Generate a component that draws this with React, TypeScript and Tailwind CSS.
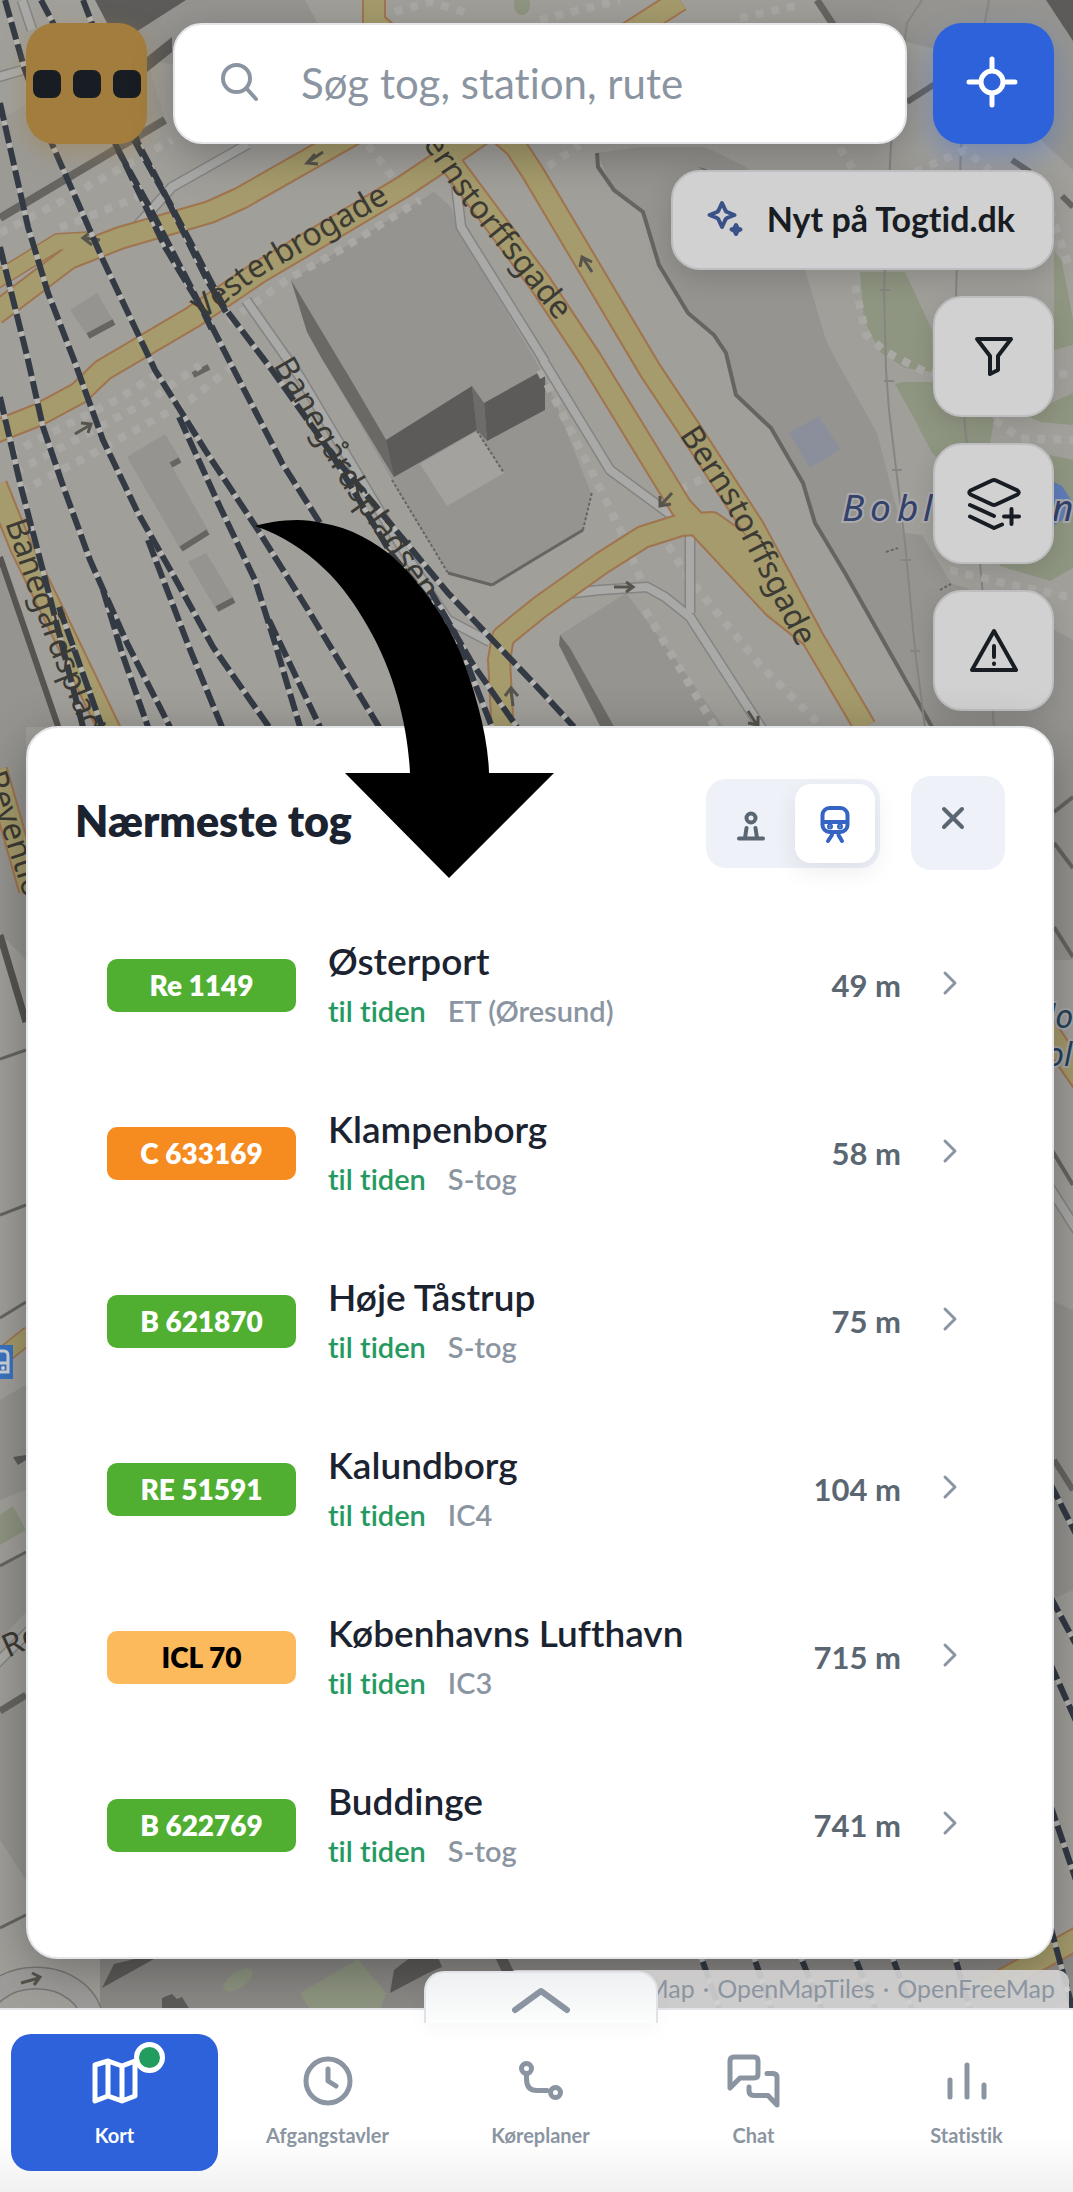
import type { ReactNode } from 'react';

const yellowRoads = [
  'M374 0 L374 22 L516 147 L533 173 L650 370 L688 427 L753 527 L812 637 L865 727',
  'M680 0 L630 32 L448 157 L403 187 L258 273 L193 317 L103 370 L79 393 L38 415 L-5 432',
  'M420 96 L336 144 L241 198 L210 212 L120 238 L69 258 L-5 314',
  'M436 143 L540 283 L591 360 L681 507 L774 607 L812 637',
  'M503 735 L499 660 L503 637 L540 607 L602 563 L643 537 L681 525 L712 523 L736 540 L774 593 L812 637',
  'M-4 485 L21 547 L52 610 L112 735',
  'M-4 770 L30 890',
  'M985 1990 L1080 1937',
  'M1040 1020 L1085 1085',
];

const thinYellow = ['M-5 281 L58 242 L93 240', 'M-5 1362 L30 1334'];

const minorRoads = [
  'M543 360 L610 470 L678 520',
  'M454 167 L461 227 L545 362',
  'M690 525 L690 613',
  'M565 594 L600 590 L647 587 L665 597 L690 617 L766 735',
  'M248 144 L172 187 L127 237',
  'M246 300 L300 377 L379 510 L430 593 L448 620 L490 642',
  'M22 0 L32 30',
  'M-5 78 L30 68',
  'M1045 1180 L1080 1235',
  'M-5 1665 L30 1630',
];

const rails = [
  'M5 0 L24 67 L52 144 L103 260 L155 370 L207 453 L258 530 L310 613 L379 727',
  'M41 0 L53 23 L120 153 L165 247 L207 317 L234 370 L282 463 L320 523',
  'M83 0 L138 143 L193 247 L224 307 L272 370 L331 453 L379 510 L448 593 L540 690 L574 727',
  'M0 103 L28 227 L48 293 L74 360 L103 440 L138 513 L176 580 L213 647 L269 727',
  'M0 247 L28 360 L43 427 L62 483 L90 560 L127 643 L170 727',
  'M118 150 L150 208 L196 297 L212 330',
  'M134 140 L165 195 L207 280 L226 312',
  'M0 397 L21 487 L48 590 L83 727',
  'M59 607 L102 727',
  'M103 590 L122 653 L148 727',
  'M148 540 L189 647 L222 727',
  'M179 417 L220 507 L255 580 L275 643 L300 727',
  'M269 620 L320 727',
  'M331 453 L392 555 L455 633 L492 727',
  'M430 590 L472 663 L517 727',
  'M1050 1483 L1080 1542',
  'M1050 1596 L1080 1652',
  'M1050 1663 L1080 1730',
  'M1050 1804 L1080 1892',
  'M1050 1925 L1073 2010',
  'M695 1940 L720 2010',
  'M748 1940 L772 2010',
  'M794 1940 L822 2010',
  'M848 1940 L876 2010',
  'M886 1940 L912 2010',
  'M950 1940 L970 2010',
];

const footpaths = [
  'M0 233 L60 202 L172 140',
  'M60 228 L140 196',
  'M10 454 L120 398 L160 372',
  'M15 472 L150 400 L200 365',
  'M20 492 L90 455 L190 400 L230 368',
  'M228 322 L290 278 L340 250 L420 200',
  'M368 145 L395 180',
  'M540 370 L596 480 L625 540 L645 590',
  'M680 490 L720 470',
  'M668 545 L690 580 L760 665 L820 725',
  'M645 610 L715 727',
  'M855 285 L866 335 L886 352 L925 372 L1010 380 L1073 373',
  'M1050 210 L1070 270',
  'M535 175 L580 145',
  'M395 12 L430 2 L470 14',
  'M540 20 L620 0',
  'M740 18 L800 5',
  'M950 570 L1000 582 L1073 598',
  'M995 420 L1020 438 L1073 440',
  'M840 148 L855 172',
  'M915 172 L965 150 L990 170',
];

const darkFaces = [
  '95,0 186,0 136,32 107,23',
  '147,57 172,37 172,52 147,72',
  '386,440 472,386 477,430 394,477',
  '484,403 545,369 545,410 487,441',
  '1046,0 1073,0 1073,41',
  '102,1988 114,1964 151,1955 170,1950',
  '162,1998 172,1994 177,1999 182,1997 190,2010 162,2010',
  '390,1993 394,1970 420,1950 437,1955 442,1967 426,1974',
  '494,1955 506,1955 514,1972 502,1972',
  '698,167 714,172 716,176',
  '13,1457 26,1455 26,1460 18,1465',
];

function CityMap() {
  return (
    <svg
      className="absolute inset-0 h-full w-full"
      viewBox="0 0 1073 2192"
      preserveAspectRatio="xMidYMin slice"
      fontFamily='"Noto Sans", sans-serif'
      aria-hidden="true"
    >
      <rect width="1073" height="2192" fill="#a09f9a" />

      <g fill="#959490">
        <polygon points="186,0 305,0 318,24 200,70 150,60 136,32" />
        <polygon points="60,85 147,60 165,120 0,217 0,120" fill="#9b9a95" />
        <polygon points="597,153 640,147 705,147 746,167 780,220 805,270 826,340 836,360 877,433 903,533 922,535 951,583 1000,600 1073,640 1073,960 932,960 932,727 845,573 815,523 803,483 771,428 736,395 726,353 714,335 688,313 659,265 643,212 614,190" />
        <polygon points="820,0 1046,0 1073,41 1073,170 1020,120 940,50 838,26" />
        <polygon points="291,280 434,192 451,207 461,235 545,377 591,493 583,530 533,560 492,585 448,573 392,480 307,332" />
        <polygon points="70,310 97,293 114,322 89,338" />
        <polygon points="127,457 165,434 179,457 172,467 208,530 181,550" />
        <polygon points="188,562 206,553 234,599 217,611" />
        <polygon points="560,635 626,593 671,653 726,730 616,730" />
        <polygon points="0,557 60,727 26,727 26,960 0,933" />
        <polygon points="0,1400 26,1385 26,1490 0,1500" />
        <polygon points="0,1563 26,1552 26,1612 0,1640" />
        <polygon points="0,1711 26,1696 26,1880 0,1840" />
        <polygon points="1050,1300 1073,1310 1073,1590 1050,1600" />
        <polygon points="100,1950 1073,1950 1073,2010 100,2010" fill="#8b8986" />
      </g>

      <g fill="#8e9580">
        <polygon points="860,272 905,272 932,330 933,372 905,368 880,352 864,320" />
        <polygon points="1054,250 1062,262 1073,320 1073,345 1054,350" />
        <polygon points="895,384 903,382 960,382 980,400 994,420 990,443 940,460 932,453 915,420" />
        <polygon points="1025,415 1073,393 1073,425 1040,422" />
        <polygon points="1050,455 1073,460 1073,568 1050,581 1000,566 990,540" />
        <polygon points="300,1993 358,1959 386,1993 380,2010 310,2010" />
        <polygon points="0,1515 13,1506 26,1530 0,1545" />
        <ellipse cx="238" cy="1980" rx="17" ry="8" transform="rotate(-35 238 1980)" />
        <ellipse cx="522" cy="5" rx="8" ry="10" />
      </g>
      <polygon points="789,433 819,416 840,449 810,468" fill="#8b8f9c" />
      <polygon points="1050,480 1062,486 1073,503 1062,520 1050,528" fill="#5f7cb8" />

      <polygon points="291,280 345,370 386,440 394,477 322,359 307,332" fill="#6a6966" />
      <polygon points="324,360 345,370 386,440 394,477" fill="#6a6966" />
      <polygon points="472,386 484,403 487,441 477,430" fill="#6d6c69" />
      <polygon points="560,635 570,648 616,730 602,730 559,645" fill="#6d6c69" />
      <g fill="#5c5b59">
        {darkFaces.map((points) => (
          <polygon key={points} points={points} />
        ))}
      </g>
      <polygon points="420,464 477,431 504,473 447,506" fill="#a3a29e" />

      <g fill="none" stroke="#666562">
        <path d="M0 218 L165 120" strokeWidth="8" />
        <path d="M88 336 L114 322 M181 549 L208 532 M217 609 L234 600 M171 465 L180 460 M193 375 L209 367" strokeWidth="6" />
        <path d="M0 557 L60 732" strokeWidth="6" stroke="#555451" />
        <path d="M0 935 L26 1022" strokeWidth="7" stroke="#555451" />
        <path d="M58 727 V760" strokeWidth="3" />
        <path d="M597 153 L598 167 L614 190 L643 212 L659 265 L688 313 L714 335 L726 353 L736 395 L771 428 L803 483 L815 523 L845 573 L932 727" strokeWidth="4" />
        <path d="M533 560 L583 530 M492 585 L533 560 M448 573 L492 585" strokeWidth="3" />
        <path d="M392 480 L448 573 M583 530 L592 492 M477 431 L504 473 M886 552 L898 548 M940 590 L951 584" strokeWidth="2" strokeDasharray="3 2" />
        <path d="M907 102 L935 84 M1012 160 L1030 172 M1062 196 L1073 207" strokeWidth="6" />
        <path d="M817 0 L834 26" strokeWidth="7" />
        <path d="M0 1059 L26 1050 M0 1215 L26 1205 M0 1318 L26 1302 M0 1566 L26 1552" strokeWidth="3" />
        <path d="M0 1711 L26 1695" strokeWidth="7" />
        <path d="M0 1928 L26 1915" strokeWidth="3" />
        <path d="M1054 812 L1073 797 M1054 843 L1073 868 M1054 927 L1073 957 M1050 1147 L1073 1185" strokeWidth="4" />
        <path d="M1054 1460 L1073 1490" strokeWidth="6" />
      </g>

      <g fill="none" stroke="#858583" strokeWidth="2">
        <path d="M922 0 L907 23 L891 143 L884 290 L886 370 L889 410 L905 543 L915 650 L925 727" />
        <path d="M989 0 L961 147 L956 293 L965 427 L981 573 L994 727" />
        <path d="M880 290 H890 M884 381 H894 M892 470 H902 M901 560 H911 M910 651 H920" />
      </g>

      <g fill="none" stroke="#a9a8a4" strokeWidth="8" strokeDasharray="8 8">
        {footpaths.map((d) => (
          <path key={d} d={d} />
        ))}
      </g>

      <g fill="none" strokeLinejoin="round">
        {minorRoads.map((d) => (
          <path key={d} d={d} stroke="#858482" strokeWidth="11" />
        ))}
        {minorRoads.map((d) => (
          <path key={d} d={d} stroke="#a9a9a7" strokeWidth="8" />
        ))}
        <ellipse cx="36" cy="2022" rx="56" ry="44" stroke="#777674" strokeWidth="23" />
        <ellipse cx="36" cy="2022" rx="56" ry="44" stroke="#9d9c9a" strokeWidth="20" />
        {thinYellow.map((d) => (
          <path key={d} d={d} stroke="#a0744f" strokeWidth="18" />
        ))}
        {yellowRoads.map((d) => (
          <path key={d} d={d} stroke="#a0744f" strokeWidth="24" />
        ))}
        {thinYellow.map((d) => (
          <path key={d} d={d} stroke="#a59b6c" strokeWidth="15" />
        ))}
        {yellowRoads.map((d) => (
          <path key={d} d={d} stroke="#a59b6c" strokeWidth="20" />
        ))}
      </g>

      <g fill="none" stroke="#56544c" strokeWidth="3">
        <path d="M323 152 L308 162 M315 154 L307 163 L318 164" />
        <path d="M100 240 L84 238 M92 231 L83 238 L92 245" />
        <path d="M592 272 L583 258 M580 267 L582 257 L592 262" />
        <path d="M672 493 L661 505 M660 496 L660 506 L671 504" />
        <path d="M75 434 L90 425 M81 423 L91 424 L88 433" />
        <path d="M614 587 H632 M626 582 L633 587 L626 592" />
        <path d="M748 711 L757 725 M748 723 L758 725 L758 716" />
        <path d="M513 706 L511 690 M505 696 L511 688 L518 696" />
        <path d="M21 1983 L39 1978 M32 1973 L40 1977 L34 1985" />
      </g>

      <g fill="none">
        {rails.map((d) => (
          <path key={d} d={d} stroke="#b5b4b0" strokeWidth="5" />
        ))}
        {rails.map((d) => (
          <path key={d} d={d} stroke="#333a44" strokeWidth="6" strokeDasharray="18 5" />
        ))}
      </g>

      <defs>
        <path id="vesterbrogade" d="M203 320 L258 278 L410 190" />
        <path id="bernstorff-north" d="M411 126 L460 200 L580 350" />
        <path id="bernstorff-south" d="M679 435 L725 505 L771 595 L812 675" />
        <path id="banegaard-east" d="M273 365 L345 490 L440 625" />
        <path id="banegaard-west" d="M5 523 L46 640 L98 770" />
        <path id="reventlow" d="M-16 775 L30 915" />
      </defs>
      <g fill="#3b3a34" fontSize="32">
        <text><textPath href="#vesterbrogade">Vesterbrogade</textPath></text>
        <text><textPath href="#bernstorff-north">Bernstorffsgade</textPath></text>
        <text><textPath href="#bernstorff-south">Bernstorffsgade</textPath></text>
        <text><textPath href="#banegaard-east">Banegårdspladsen</textPath></text>
        <text><textPath href="#banegaard-west">Banegårdsplads</textPath></text>
        <text><textPath href="#reventlow">Reventlo</textPath></text>
        <text x="8" y="1658" transform="rotate(-24 8 1658)">Ro</text>
      </g>
      <g fontStyle="italic" stroke="#a9a9ac" strokeWidth="4" paintOrder="stroke">
        <text x="842 870 897 923" y="521" fontSize="37" fill="#33416b">Bobl</text>
        <text x="1052" y="521" fontSize="37" fill="#33416b">n</text>
        <text x="1047" y="1028" fontSize="32" fill="#254258">lo</text>
        <text x="1046" y="1066" fontSize="32" fill="#254258">ol</text>
      </g>

      <rect x="-20" y="1345" width="33" height="34" fill="#3a74c0" />
      <path d="M-2 1351 H4 Q8 1351 8 1356 V1372 H-2 M-2 1363 H8" fill="none" stroke="#cfd4dc" strokeWidth="3" />
      <circle cx="3" cy="1368" r="2" fill="#cfd4dc" />
    </svg>
  );
}

function Arrow() {
  return (
    <svg
      className="pointer-events-none absolute inset-0 z-30 h-full w-full"
      viewBox="0 0 1073 2192"
      preserveAspectRatio="xMidYMin slice"
      aria-hidden="true"
    >
      <path d="M255 526 C272 521 300 517 322 523 C352 528 375 542 394 558 C420 582 447 620 460 652 C475 690 488 735 489 773 H554 L449 878 L345 773 H410 C408 730 396 675 368 627 C345 585 310 545 255 526 Z" />
    </svg>
  );
}

function Icon({ size, width, children, className = '' }: { size: number; width: number; children: ReactNode; className?: string }) {
  return (
    <svg
      width={size}
      height={size}
      viewBox={`0 0 ${size} ${size}`}
      fill="none"
      stroke="currentColor"
      strokeWidth={width}
      strokeLinecap="round"
      strokeLinejoin="round"
      className={`shrink-0 overflow-visible ${className}`}
      aria-hidden="true"
    >
      {children}
    </svg>
  );
}

const trains = [
  { line: 'Re 1149', tone: 'bg-[#50ae31] text-white', name: 'Østerport', type: 'ET (Øresund)', distance: '49 m' },
  { line: 'C 633169', tone: 'bg-[#f68b1f] text-white', name: 'Klampenborg', type: 'S-tog', distance: '58 m' },
  { line: 'B 621870', tone: 'bg-[#50ae31] text-white', name: 'Høje Tåstrup', type: 'S-tog', distance: '75 m' },
  { line: 'RE 51591', tone: 'bg-[#50ae31] text-white', name: 'Kalundborg', type: 'IC4', distance: '104 m' },
  { line: 'ICL 70', tone: 'bg-[#fdba5c] text-black', name: 'Københavns Lufthavn', type: 'IC3', distance: '715 m' },
  { line: 'B 622769', tone: 'bg-[#50ae31] text-white', name: 'Buddinge', type: 'S-tog', distance: '741 m' },
];

function TrainRow({ train }: { train: (typeof trains)[number] }) {
  return (
    <li>
      <button type="button" className="flex h-[168px] w-full items-center gap-8 pr-[35px] pb-0.5 pl-8 text-left">
        <span className={`flex h-[53px] w-[189px] shrink-0 items-center justify-center rounded-[10px] text-[28px] leading-none font-extrabold ${train.tone}`}>
          {train.line}
        </span>
        <span className="flex min-w-0 flex-1 flex-col gap-1">
          <span className="text-[37px] leading-[48px] font-semibold text-[#1b2330]">{train.name}</span>
          <span className="flex gap-[22px] text-[29px] leading-[44px] font-semibold">
            <span className="text-[#259a60]">til tiden</span>
            <span className="text-[#8b95a1]">{train.type}</span>
          </span>
        </span>
        <span className="flex items-center gap-[29px] text-[31px] font-bold text-[#5b6673]">
          {train.distance}
          <Icon size={40} width={3} className="mb-1 text-[#8b95a1]">
            <path d="M15 10 L25 20 L15 30" />
          </Icon>
        </span>
      </button>
    </li>
  );
}

const navItems: { label: string; icon: ReactNode }[] = [
  {
    label: 'Kort',
    icon: <path d="M6 10 L19 6 L33 11 L46 6 V41 L33 46 L19 41 L6 46 Z M19 6 V41 M33 11 V46" />,
  },
  {
    label: 'Afgangstavler',
    icon: (
      <>
        <circle cx="26" cy="26" r="22" />
        <path d="M26 14 V26 L34 31" />
      </>
    ),
  },
  {
    label: 'Køreplaner',
    icon: (
      <>
        <circle cx="11.500" cy="13.500" r="5" />
        <path d="M11.500 20 V24 Q11.500 35.500 22 35.500 H32" />
        <circle cx="40.500" cy="37.500" r="5" />
      </>
    ),
  },
  {
    label: 'Chat',
    icon: (
      <>
        <path d="M2 33 V6 Q2 2 6 2 H26 Q30 2 30 6 V19 Q30 23 26 23 H12 Z" />
        <path d="M39 18.500 H45 Q49 18.500 49 22.500 V50 L40 40.500 H26 Q21 40.500 21 36 V32" />
      </>
    ),
  },
  { label: 'Statistik', icon: <path d="M9 25 V42 M26 10 V42 M43 30 V42" /> },
];

const mapButton =
  'flex size-[121px] items-center justify-center rounded-[29px] border-2 border-[#bebec0] bg-[#d1d1d1] text-[#181c23] shadow-[0_8px_24px_rgba(0,0,0,0.12)]';

export default function App() {
  return (
    <main className="relative flex min-h-screen flex-col overflow-hidden bg-[#a09f9a] font-[Lato,sans-serif] [font-variant-ligatures:none]">
      <CityMap />

      <div className="relative z-10 flex flex-col pt-[23px] pr-[19px] pl-[26px]">
        <header className="flex gap-[26px]">
          <button
            type="button"
            aria-label="Menu"
            className="flex size-[121px] shrink-0 items-center justify-center gap-3 rounded-[29px] bg-[#a27d3e] shadow-[0_8px_24px_rgba(162,125,62,0.4)]"
          >
            <span className="size-7 rounded-lg bg-[#181c23]" />
            <span className="size-7 rounded-lg bg-[#181c23]" />
            <span className="size-7 rounded-lg bg-[#181c23]" />
          </button>
          <label className="flex h-[121px] min-w-0 flex-1 items-center gap-[42px] rounded-[29px] border-2 border-[#e5e6e9] bg-white pb-0.5 pl-11 text-[#8b95a1] shadow-[0_12px_40px_rgba(0,0,0,0.25)]">
            <Icon size={40} width={4} className="mb-1">
              <circle cx="17.500" cy="17.500" r="13.500" />
              <path d="M28 28 L37 38" />
            </Icon>
            <input
              type="search"
              aria-label="Søg"
              placeholder="Søg tog, station, rute"
              className="h-full min-w-0 flex-1 bg-transparent text-[42px] text-[#1b2330] outline-none placeholder:text-[#8b95a1]"
            />
          </label>
          <button
            type="button"
            aria-label="Min placering"
            className="flex size-[121px] shrink-0 items-center justify-center rounded-[29px] bg-[#2d62da] pr-1 pb-1 text-white shadow-[0_12px_28px_rgba(45,98,218,0.35)]"
          >
            <Icon size={52} width={5}>
              <circle cx="26" cy="26" r="11" />
              <path d="M26 3 V12 M26 40 V49 M3 26 H12 M40 26 H49" />
            </Icon>
          </button>
        </header>

        <div className="mt-[26px] flex flex-col items-end gap-[26px]">
          <button
            type="button"
            className="flex h-[100px] items-center gap-[22px] rounded-[29px] border-2 border-[#bebec0] bg-[#d1d1d1] pr-[37px] pb-1 pl-8 text-[34px] font-bold text-[#181c23] shadow-[0_8px_28px_rgba(0,0,0,0.15)]"
          >
            <Icon size={40} width={4} className="text-[#3a5288]">
              <path d="M17 5 L20.500 12.500 Q21 13.500 22 14 L29.500 17 L22 20 Q21 20.500 20.500 21.500 L17 29 L13.500 21.500 Q13 20.500 12 20 L4.500 17 L12 14 Q13 13.500 13.500 12.500 Z" />
              <path d="M31 27 L32.500 30 L35.500 31.500 L32.500 33 L31 36 L29.500 33 L26.500 31.500 L29.500 30 Z" fill="currentColor" />
            </Icon>
            Nyt på Togtid.dk
          </button>
          <button type="button" aria-label="Filter" className={mapButton}>
            <Icon size={44} width={4}>
              <path d="M5 4 H39 L26 21 V35 L18 39 V21 Z" />
            </Icon>
          </button>
          <button type="button" aria-label="Kortlag" className={mapButton}>
            <Icon size={56} width={4}>
              <path d="M30 4.500 L51.500 14.500 Q54 16.500 51.500 18.500 L30 28.500 Q28 29.500 26 28.500 L4.500 18.500 Q2 16.500 4.500 14.500 L26 4.500 Q28 3.500 30 4.500 Z" />
              <path d="M4 29 L28 40 M4 40.500 L28 52 L36 48.500 M45.500 33 V48 M38 40.500 H53" />
            </Icon>
          </button>
          <button type="button" aria-label="Driftsmeldinger" className={mapButton}>
            <Icon size={52} width={4}>
              <path d="M26 6 L48 45 H4 Z M26 21 V32 M26 38.500 V39" />
            </Icon>
          </button>
        </div>

        <section
          aria-labelledby="nearest-title"
          className="mt-[15px] rounded-[32px] border-2 border-[#e5e6e9] bg-white px-[47px] pt-12 pb-[47px] shadow-[0_12px_50px_rgba(0,0,0,0.3)]"
        >
          <div className="flex items-center justify-between">
            <h1 id="nearest-title" className="pb-1.5 text-[43px] leading-none font-extrabold text-[#1b2330]">
              Nærmeste tog
            </h1>
            <div className="flex items-center gap-[31px]">
              <div className="flex h-[89px] w-[174px] gap-1 rounded-[20px] bg-[#eef1f7] p-[5px]">
                <button type="button" aria-label="Stationer" className="flex flex-1 items-center justify-center rounded-2xl text-[#5b6673]">
                  <Icon size={40} width={4}>
                    <circle cx="20" cy="15" r="4.500" />
                    <path d="M15.500 25 L14 35 M24.500 25 L26 35 M8 35.500 H32" />
                  </Icon>
                </button>
                <button
                  type="button"
                  aria-label="Tog"
                  aria-pressed="true"
                  className="flex flex-1 items-center justify-center rounded-2xl bg-white text-[#3564c4] shadow-[0_8px_24px_rgba(20,30,50,0.08)]"
                >
                  <Icon size={40} width={4}>
                    <rect x="7.500" y="5" width="25" height="24" rx="7" />
                    <path d="M8 19 H32" />
                    <path d="M17 32 L13 38 M23.500 32 L27 38" />
                    <circle cx="15" cy="23.500" r="1" fill="currentColor" />
                    <circle cx="25" cy="23.500" r="1" fill="currentColor" />
                  </Icon>
                </button>
              </div>
              <button
                type="button"
                aria-label="Luk"
                className="flex size-[94px] items-center justify-center rounded-[20px] bg-[#eef1f7] pr-2.5 pb-2.5 text-[#5b6673]"
              >
                <Icon size={40} width={4}>
                  <path d="M11 11 L29 29 M29 11 L11 29" />
                </Icon>
              </button>
            </div>
          </div>
          <ul className="mt-8">
            {trains.map((train) => (
              <TrainRow key={train.line} train={train} />
            ))}
          </ul>
        </section>
      </div>

      <div className="relative z-10 mt-auto flex justify-end pr-1">
        <div className="flex h-[38px] items-center gap-2 rounded-t-xl bg-[#d5d4d4]/90 px-3.5 text-[25px] whitespace-nowrap text-[#8b95a1]">
          <a href="#openstreetmap">OpenStreetMap</a>
          <span>·</span>
          <a href="#openmaptiles">OpenMapTiles</a>
          <span>·</span>
          <a href="#openfreemap">OpenFreeMap</a>
        </div>
      </div>

      <nav className="relative z-20 border-t-2 border-[#e3e5e9] bg-linear-to-b from-white from-70% to-[#f1f1f2] pt-6 pr-[3px] pb-[21px] pl-[11px]">
        <div className="relative">
          <button
            type="button"
            aria-label="Vis mere"
            className="absolute -top-[63px] left-1/2 flex h-[52px] w-[234px] -translate-x-1/2 items-center justify-center rounded-t-[20px] border-2 border-b-0 border-[#e0e2e7] bg-linear-to-b from-[#eff0f1] to-[#fcfdfd] pt-1 text-[#8b95a1] shadow-[0_8px_20px_rgba(0,0,0,0.03)]"
          >
            <Icon size={56} width={6}>
              <path d="M2 38 L28 19 L54 38" />
            </Icon>
          </button>
          <ul className="flex gap-1.5">
            {navItems.map((item, i) => (
              <li key={item.label} className="flex-1">
                <a
                  href={`#${item.label.toLowerCase()}`}
                  aria-current={i === 0 ? 'page' : undefined}
                  className={`flex h-[137px] flex-col items-center gap-4 rounded-[20px] pt-[21px] text-[20px] leading-6 font-bold ${
                    i === 0 ? 'bg-[#2d62da] text-white' : 'text-[#8b95a1]'
                  }`}
                >
                  <span className="relative">
                    <Icon size={52} width={5}>
                      {item.icon}
                    </Icon>
                    {i === 0 && (
                      <span className="absolute -top-[13px] left-[45px] size-[31px] rounded-full border-[5px] border-white bg-[#229c5f]" />
                    )}
                  </span>
                  {item.label}
                </a>
              </li>
            ))}
          </ul>
        </div>
      </nav>
      <Arrow />
    </main>
  );
}
